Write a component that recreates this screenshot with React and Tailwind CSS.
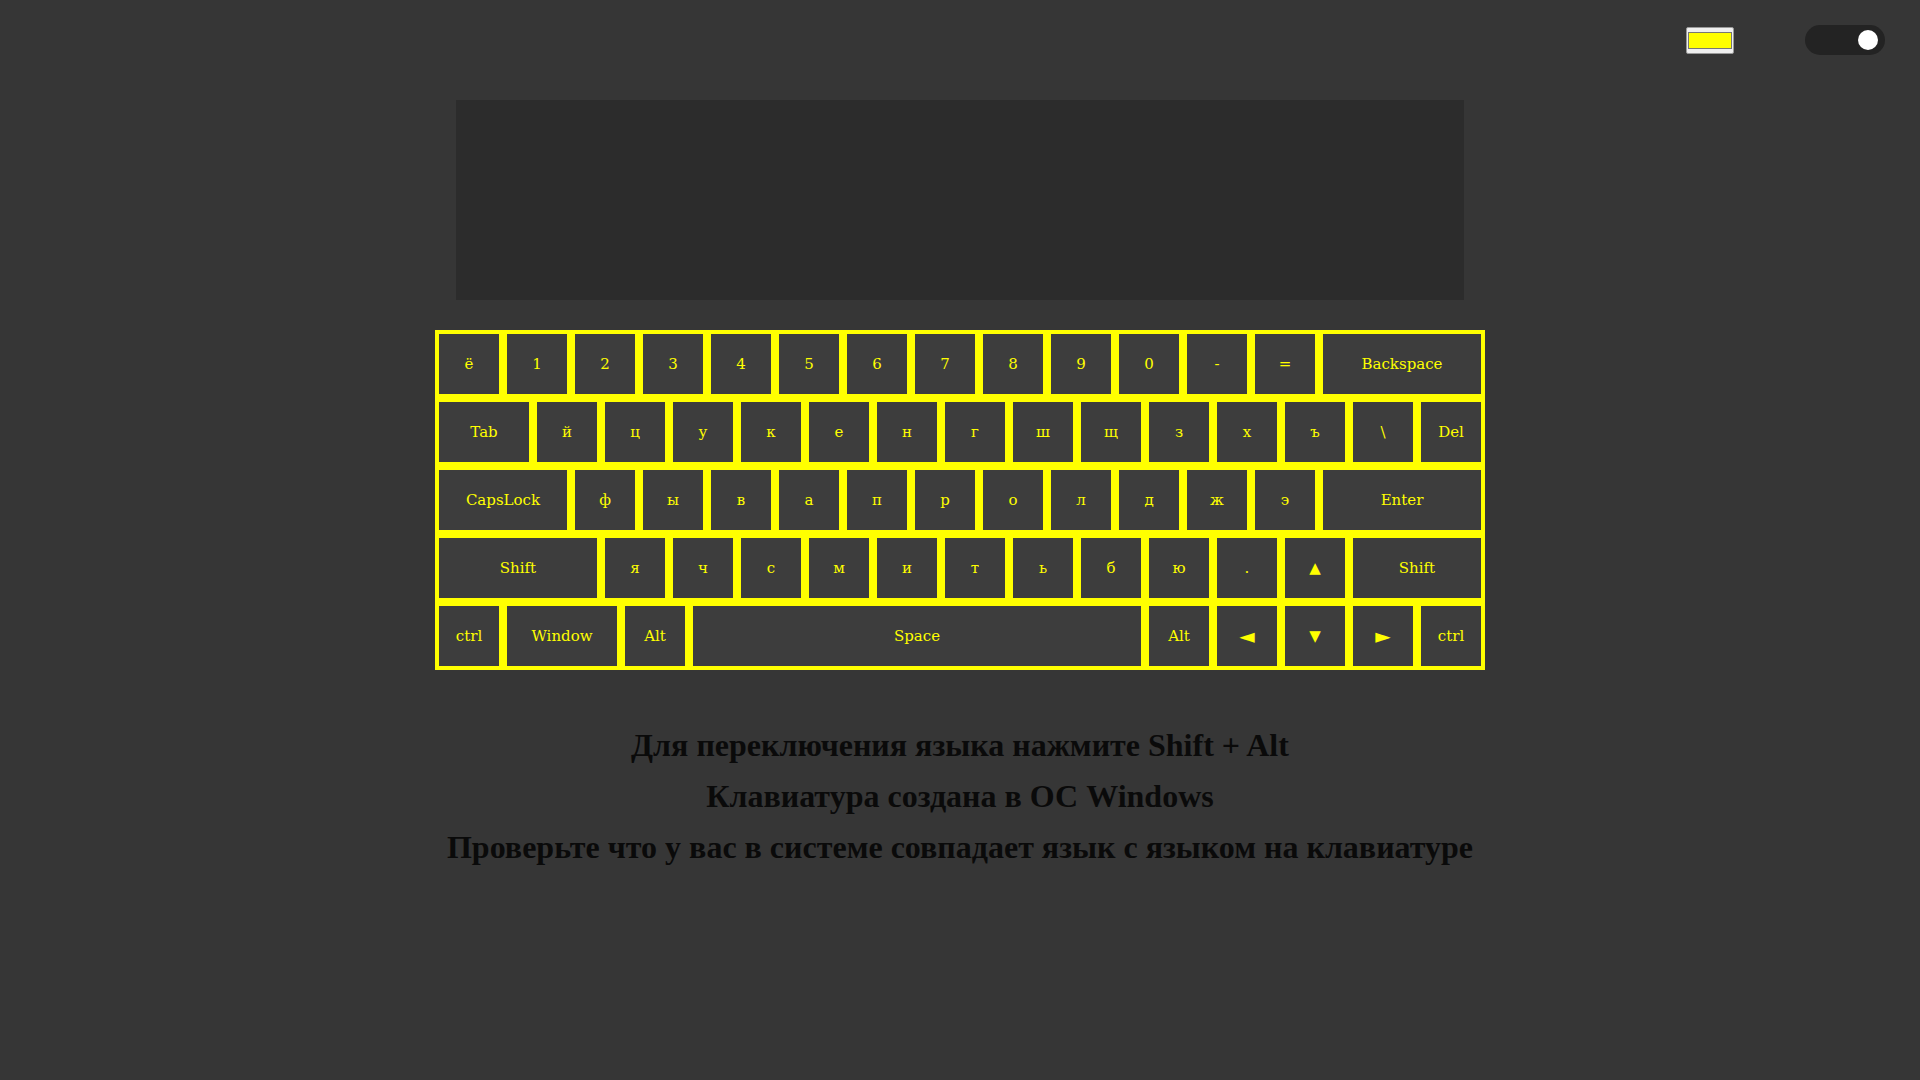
const rows = [
  [['ё'], ['1'], ['2'], ['3'], ['4'], ['5'], ['6'], ['7'], ['8'], ['9'], ['0'], ['-'], ['='], ['Backspace', 'w-[158px]']],
  [['Tab', 'w-[90px]'], ['й'], ['ц'], ['у'], ['к'], ['е'], ['н'], ['г'], ['ш'], ['щ'], ['з'], ['х'], ['ъ'], ['\\'], ['Del']],
  [['CapsLock', 'w-[128px]'], ['ф'], ['ы'], ['в'], ['а'], ['п'], ['р'], ['о'], ['л'], ['д'], ['ж'], ['э'], ['Enter', 'w-[158px]']],
  [['Shift', 'w-[158px]'], ['я'], ['ч'], ['с'], ['м'], ['и'], ['т'], ['ь'], ['б'], ['ю'], ['.'], ['▲'], ['Shift', 'w-[128px]']],
  [['ctrl'], ['Window', 'w-[110px]'], ['Alt'], ['Space', 'w-[448px]'], ['Alt'], ['◄', 'w-[60px] text-[20px]'], ['▼'], ['►', 'w-[60px] text-[20px]'], ['ctrl']],
];

function Key({ label, width }) {
  const size = width && width.includes('text-') ? '' : 'text-[15px]';
  return (
    <div
      className={`flex h-[60px] shrink-0 items-center justify-center bg-[#3d3d3d] text-[#ffff00] ${size} ${width || 'w-[60px]'}`}
    >
      {label}
    </div>
  );
}

function ColorPicker() {
  return (
    <div className="flex h-[27px] w-[48px] items-center justify-center rounded-[2px] border border-[#9a9a9a] bg-[#efefef]">
      <div className="h-[17px] w-[44px] border border-[#777] bg-[#ffff00]" />
    </div>
  );
}

function Toggle() {
  return (
    <div className="flex h-[30px] w-[80px] items-center justify-end rounded-full bg-[#232323] pr-[7px]">
      <div className="h-[20px] w-[20px] rounded-full bg-white" />
    </div>
  );
}

export default function App() {
  return (
    <div className="min-h-screen bg-[#363636] font-['DejaVu_Serif',serif]">
      <div className="flex items-center justify-end gap-[71px] pr-[35px] pt-[25px]">
        <ColorPicker />
        <Toggle />
      </div>

      <div className="mx-auto mt-[45px] h-[200px] w-[1008px] bg-[#2c2c2c]" />

      <div className="mx-auto mt-[30px] flex w-[1050px] flex-col gap-2 bg-[#ffff00] p-1">
        {rows.map((row, i) => (
          <div key={i} className="flex gap-2">
            {row.map(([label, width], j) => (
              <Key key={j} label={label} width={width} />
            ))}
          </div>
        ))}
      </div>

      <div className="mt-[50px] text-center font-['Liberation_Serif',serif] text-[32px] font-bold leading-[51px] text-[#0a0a0a]">
        <p>Для переключения языка нажмите Shift + Alt</p>
        <p>Клавиатура создана в ОС Windows</p>
        <p>Проверьте что у вас в системе совпадает язык с языком на клавиатуре</p>
      </div>
    </div>
  );
}
